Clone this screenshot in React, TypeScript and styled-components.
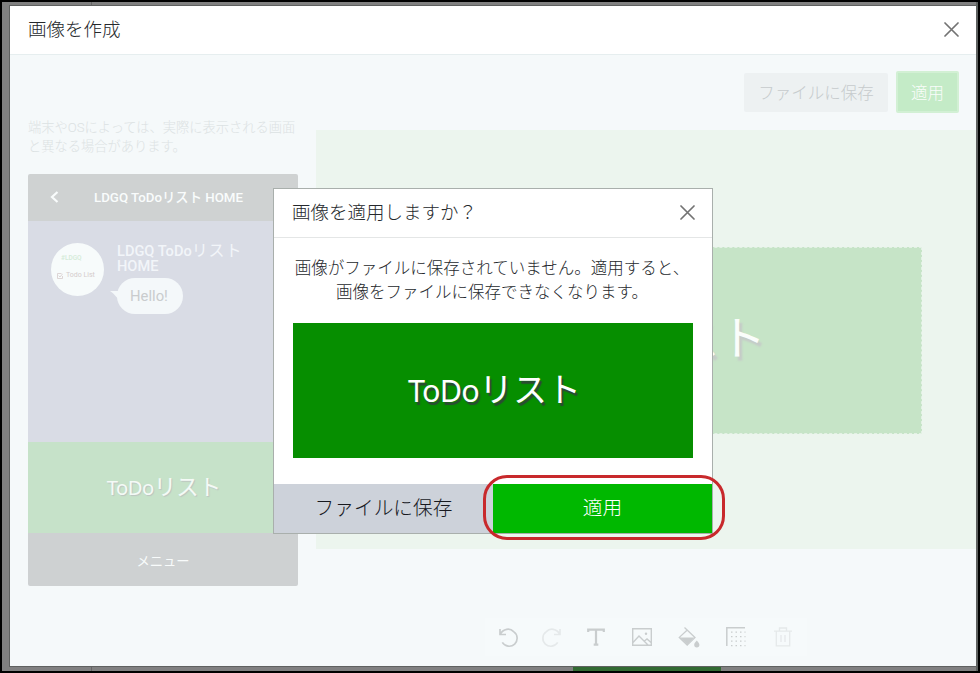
import React from "react";
import styled, { createGlobalStyle } from "styled-components";

const jp = `"Noto Sans CJK JP", sans-serif`;

const GlobalStyle = createGlobalStyle`
  * { box-sizing: border-box; }
  html, body { margin: 0; padding: 0; background: #000; overflow: hidden; }
  body { font-family: Roboto, ${jp}; font-weight: 300; }
  button { border: 0; padding: 0; margin: 0; font: inherit; background: none; }
  h1, h2, p { margin: 0; font-weight: inherit; }
  svg { display: block; }
`;

const Screen = styled.div`
  width: 980px;
  height: 673px;
  padding: 2px;
  background: #000;
`;

const Backdrop = styled.div`
  position: relative;
  width: 976px;
  height: 669px;
  padding: 4px 2px 5px 8px;
  background: linear-gradient(90deg, #808080 0 974px, #5c605e 974px);
`;

const PageRule = styled.i<{ $bottom?: boolean }>`
  position: absolute;
  left: 89px;
  ${(p) => (p.$bottom ? "bottom: 0;" : "top: 0;")}
  width: 1px;
  height: 4px;
  background: #666;
`;

const PageAction = styled.i`
  position: absolute;
  left: 571px;
  bottom: 0;
  width: 148px;
  height: 5px;
  background: #326a32;
`;

const Modal = styled.section`
  display: flex;
  flex-direction: column;
  position: relative;
  width: 966px;
  height: 660px;
  background: #f5f9fa;
  box-shadow: 0 0 0 1px #5f6160;
`;

const TitleBar = styled.header<{ $dialog?: boolean }>`
  display: flex;
  flex: none;
  align-items: center;
  justify-content: space-between;
  height: 49px;
  padding: 0 17px 2px 18px;
  background: #fff;
  border-bottom: 1px solid ${(p) => (p.$dialog ? "#e4e6e6" : "#e6eeef")};
`;

const Title = styled.h1`
  padding-bottom: 3px;
  font: 300 18.5px/26px ${jp};
  color: #25282c;
  white-space: nowrap;
`;

const CloseButton = styled.button`
  width: 15px;
  height: 15px;
  color: #737373;
`;

const Body = styled.div`
  display: grid;
  grid-template-columns: 306px 1fr;
  flex: 1;
`;

const Preview = styled.aside`
  padding: 63px 18px 0;
`;

const Note = styled.p`
  width: 272px;
  height: 56px;
  font: 300 13.25px/19px Roboto, ${jp};
  color: #dce2e3;
  white-space: nowrap;
`;

const Phone = styled.div`
  display: flex;
  flex-direction: column;
  width: 270px;
  height: 412px;
  border-radius: 2px;
  overflow: hidden;
`;

const PhoneHead = styled.div`
  display: flex;
  align-items: center;
  height: 47px;
  padding: 0 0 1px 22px;
  background: #cfd2d2;
  color: #f9fcfc;
`;

const PhoneTitle = styled.div`
  margin: 2px 0 0 35px;
  font: 500 13.3px/20px Roboto, ${jp};
  white-space: nowrap;
`;

const Chat = styled.div`
  display: flex;
  height: 221px;
  padding: 22px 0 0 23px;
  background: #d9dce5;
`;

const Avatar = styled.div`
  display: flex;
  flex-direction: column;
  gap: 8px;
  width: 53px;
  height: 53px;
  padding: 11px 0 0 6px;
  border-radius: 50%;
  background: #f7fbfb;
`;

const AvatarBrand = styled.span`
  padding-left: 4px;
  font: 500 6.5px/9px Roboto, sans-serif;
  color: #d4ebd8;
`;

const AvatarName = styled.span`
  display: flex;
  align-items: center;
  gap: 3px;
  font: 400 7px/9px Roboto, sans-serif;
  color: #d5cccc;
  white-space: nowrap;
`;

const Messages = styled.div`
  margin-left: 13px;
`;

const Sender = styled.div`
  padding-top: 1px;
  font: 500 14.6px/15px Roboto, ${jp};
  color: #f2f5f9;
  white-space: nowrap;
`;

const SenderKana = styled.span`
  font-size: 16px;
  font-weight: 400;
  line-height: 1px;
  letter-spacing: 0.9px;
`;

const Bubble = styled.div`
  position: relative;
  width: 66px;
  height: 36px;
  margin-top: 4px;
  padding-right: 2px;
  border-radius: 18px;
  background: #f4f8fa;
  font: 400 14.8px/36px Roboto, sans-serif;
  color: #c9ccce;
  text-align: center;
`;

const BubbleTail = styled.svg`
  position: absolute;
  left: -7px;
  top: 13px;
`;

const Artwork = styled.div<{ $size: number; $color: string; $shadow: string }>`
  display: flex;
  align-items: baseline;
  justify-content: center;
  font: 400 ${(p) => p.$size}px/1.4 ${jp};
  color: ${(p) => p.$color};
  text-shadow: ${(p) => p.$shadow};
  white-space: nowrap;
`;

const Latin = styled.span`
  font-family: "Noto Sans", sans-serif;
  font-size: 0.9em;
  letter-spacing: -0.025em;
`;

const PhoneArtwork = styled(Artwork)`
  height: 91px;
  padding: 28px 0 0 2px;
  background: #c6e2c9;
`;

const PhoneMenu = styled.div`
  height: 53px;
  background: #ced1d2;
  font: 400 13.3px/56px ${jp};
  color: #f8fbfb;
  text-align: center;
`;

const Editor = styled.main`
  display: flex;
  flex-direction: column;
  align-items: stretch;
`;

const Actions = styled.div`
  display: flex;
  align-items: center;
  justify-content: flex-end;
  gap: 8px;
  height: 75px;
  padding: 0 17px 1px 0;
`;

const SoftButton = styled.button<{ $primary?: boolean }>`
  width: ${(p) => (p.$primary ? 63 : 144)}px;
  height: ${(p) => (p.$primary ? 42 : 39)}px;
  border-radius: 2px;
  background: ${(p) => (p.$primary ? "#c4ebc7" : "#edf1f2")};
  border: ${(p) => (p.$primary ? "2px solid #d2f0d4" : "0")};
  color: ${(p) => (p.$primary ? "#fafdfb" : "#c6cbcd")};
  font: 300 16.5px/24px ${jp};
  white-space: nowrap;
`;

const Stage = styled.div`
  display: flex;
  justify-content: center;
  height: 419px;
  padding-top: 117px;
  background: #ecf5ee;
`;

const StageArtwork = styled(Artwork)`
  width: 552px;
  height: 187px;
  padding: 54px 0 0 3px;
  background: #c6e4c7;
  border: 1px dashed #e3f1e5;
`;

const Toolbar = styled.div`
  display: flex;
  align-items: center;
  gap: 24px;
  width: 322px;
  height: 38px;
  margin: 69px 0 0 169px;
  padding: 0 13px;
  background: #f6fafb;
`;

const Tool = styled.button<{ $disabled?: boolean; $width: number }>`
  display: flex;
  justify-content: center;
  flex: none;
  width: ${(p) => p.$width}px;
  height: 22px;
  color: ${(p) => (p.$disabled ? "#e5e9ea" : "#c9cdce")};

  svg { flex: none; }
`;

const Dialog = styled.section`
  position: absolute;
  left: 263px;
  top: 182px;
  width: 440px;
  height: 346px;
  display: flex;
  flex-direction: column;
  border: 1px solid #a9afac;
  background: #fff;
`;

const Message = styled.p`
  padding: 17px 2px 0 0;
  height: 85px;
  font: 300 16.5px/24px ${jp};
  color: #25282c;
  text-align: center;
  white-space: nowrap;
`;

const DialogArtwork = styled(Artwork)`
  width: 400px;
  height: 135px;
  margin: 0 0 26px 19px;
  padding: 41px 0 0 3px;
  background: #068e00;
`;

const Footer = styled.div`
  display: grid;
  grid-template-columns: 219px 219px;
  height: 49px;
`;

const FooterButton = styled.button<{ $primary?: boolean }>`
  height: 49px;
  padding-bottom: 4px;
  background: ${(p) => (p.$primary ? "#00b800" : "#cdd2da")};
  color: ${(p) => (p.$primary ? "#fff" : "#17191f")};
  font: 300 19.7px/28px ${jp};
`;

const Highlight = styled.div`
  position: absolute;
  right: -13px;
  bottom: -7px;
  width: 242px;
  height: 65px;
  border: 3px solid #c8292c;
  border-radius: 24px;
  pointer-events: none;
`;

const Cross = () => (
  <svg width="15" height="15" viewBox="0 0 15 15" fill="none" stroke="currentColor" strokeWidth="1.7" strokeLinecap="round">
    <path d="M1 1 14 14M14 1 1 14" />
  </svg>
);

const ArtworkText = () => (
  <>
    <Latin>ToDo</Latin>
    <span>リスト</span>
  </>
);

const tools: { name: string; width: number; disabled?: boolean; art: React.ReactNode }[] = [
  {
    name: "undo",
    width: 20,
    art: <path d="M3 3v5.5h6M3.2 8.3C6.2 2.5 13 1.7 16.6 5.6A8 8 0 1 1 5.3 16.4" />,
  },
  {
    name: "redo",
    width: 20,
    disabled: true,
    art: <path d="M19 3v5.5h-6M18.8 8.3C15.8 2.5 9 1.7 5.4 5.6A8 8 0 1 0 16.7 16.4" />,
  },
  {
    name: "text",
    width: 20,
    art: <path d="M3.2 6V3.7h15.6V6M11 3.7v15M8.7 18.6h4.6" strokeWidth="2.2" />,
  },
  {
    name: "image",
    width: 24,
    art: (
      <>
        <path d="M1.7 2.8h18.6v16.4H1.7zM2 16.5l6-6.5 9 9M13.5 15l2.5-2 4 3.5" strokeWidth="1.4" />
        <circle cx="15" cy="7.8" r="1.2" fill="currentColor" stroke="none" />
      </>
    ),
  },
  {
    name: "fill",
    width: 22,
    art: (
      <>
        <path d="M6.5 1.5 17 11.6 9.2 19 1.3 11.4 9 4.2" strokeWidth="1.3" />
        <path d="M1.8 11.4h14.7l-7.3 7.2zM18.8 14.5c1.5 1.9 2.6 3 2.6 4.3a2.6 2.6 0 0 1-5.2 0c0-1.3 1-2.4 2.6-4.3z" fill="currentColor" stroke="none" />
      </>
    ),
  },
  {
    name: "border",
    width: 24,
    art: (
      <>
        <path d="M1.8 20V1.8H20" strokeWidth="1.5" />
        <path d="M6 6.2h14.5M6 10.7h14.5M6 15.2h14.5M6 19.7h14.5" strokeWidth="1.3" strokeDasharray="1.5 3" />
      </>
    ),
  },
  {
    name: "delete",
    width: 22,
    disabled: true,
    art: <path d="M2 5.2h18M7.5 5V2h7v3M4.3 5.2v14.6h13.4V5.2M9 9v7M13 9v7" strokeWidth="1.3" />,
  },
];

export default function App() {
  return (
    <Screen>
      <GlobalStyle />
      <Backdrop>
        <PageRule />
        <PageRule $bottom />
        <PageAction />
        <Modal>
          <TitleBar>
            <Title>画像を作成</Title>
            <CloseButton aria-label="閉じる"><Cross /></CloseButton>
          </TitleBar>
          <Body>
            <Preview>
              <Note>
                端末やOSによっては、実際に表示される画面
                <br />
                と異なる場合があります。
              </Note>
              <Phone>
                <PhoneHead>
                  <svg width="9" height="12" viewBox="0 0 9 12" fill="none" stroke="currentColor" strokeWidth="2.2">
                    <path d="M7.5 1 2 6l5.5 5" />
                  </svg>
                  <PhoneTitle>LDGQ ToDoリスト HOME</PhoneTitle>
                </PhoneHead>
                <Chat>
                  <Avatar>
                    <AvatarBrand>#LDGQ</AvatarBrand>
                    <AvatarName>
                      <svg width="6" height="6" viewBox="0 0 6 6" fill="none" stroke="currentColor" strokeWidth="0.8">
                        <path d="M5.5 3v2.5h-5v-5h4M1.7 2.6 3 4l2.6-3.2" />
                      </svg>
                      Todo List
                    </AvatarName>
                  </Avatar>
                  <Messages>
                    <Sender>
                      LDGQ ToDo<SenderKana>リスト</SenderKana>
                      <br />
                      HOME
                    </Sender>
                    <Bubble>
                      <BubbleTail width="12" height="10" viewBox="0 0 12 10">
                        <path d="M0 0h12v10C7 8 5 3 0 0z" fill="#f4f8fa" />
                      </BubbleTail>
                      Hello!
                    </Bubble>
                  </Messages>
                </Chat>
                <PhoneArtwork $size={22.5} $color="#f4faf6" $shadow="1px 1px 1px #bcc4c0">
                  <ArtworkText />
                </PhoneArtwork>
                <PhoneMenu>メニュー</PhoneMenu>
              </Phone>
            </Preview>
            <Editor>
              <Actions>
                <SoftButton>ファイルに保存</SoftButton>
                <SoftButton $primary>適用</SoftButton>
              </Actions>
              <Stage>
                <StageArtwork $size={46.5} $color="#fafdfb" $shadow="3px 4px 2px #c5cbc8">
                  <ArtworkText />
                </StageArtwork>
              </Stage>
              <Toolbar>
                {tools.map((t) => (
                  <Tool key={t.name} $width={t.width} $disabled={t.disabled} aria-label={t.name}>
                    <svg width="22" height="22" viewBox="0 0 22 22" fill="none" stroke="currentColor" strokeWidth="1.7">
                      {t.art}
                    </svg>
                  </Tool>
                ))}
              </Toolbar>
            </Editor>
          </Body>
          <Dialog>
            <TitleBar $dialog>
              <Title as="h2">画像を適用しますか？</Title>
              <CloseButton aria-label="閉じる"><Cross /></CloseButton>
            </TitleBar>
            <Message>
              画像がファイルに保存されていません。適用すると、
              <br />
              画像をファイルに保存できなくなります。
            </Message>
            <DialogArtwork $size={34} $color="#fff" $shadow="2px 3px 1px #2c4a33">
              <ArtworkText />
            </DialogArtwork>
            <Footer>
              <FooterButton>ファイルに保存</FooterButton>
              <FooterButton $primary>適用</FooterButton>
            </Footer>
            <Highlight />
          </Dialog>
        </Modal>
      </Backdrop>
    </Screen>
  );
}
